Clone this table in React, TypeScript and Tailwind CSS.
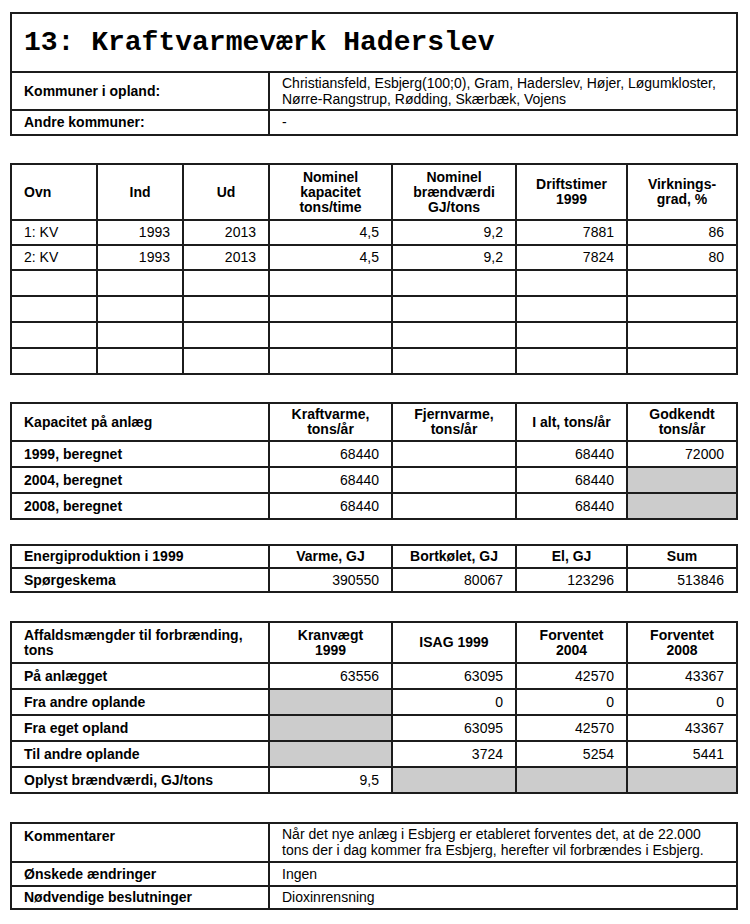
import React from 'react';

const cell = 'border-2 border-[#1c1c1c] px-[12px]';
const head = 'border-2 border-[#1c1c1c] px-[6px] text-center font-bold text-[14px] leading-[15px]';
const label = 'border-2 border-[#1c1c1c] px-[12px] font-bold text-[14px]';
const num = 'border-2 border-[#1c1c1c] px-[12px] text-right text-[14px]';
const grey = 'border-2 border-[#1c1c1c] bg-[#cccccc]';

const WideCols = () => (
  <colgroup>
    <col className="w-[258px]" />
    <col className="w-[123px]" />
    <col className="w-[124px]" />
    <col className="w-[111px]" />
    <col />
  </colgroup>
);

const ovne = [
  ['1: KV', '1993', '2013', '4,5', '9,2', '7881', '86'],
  ['2: KV', '1993', '2013', '4,5', '9,2', '7824', '80'],
];

const affald: { name: string; vals: (string | null)[] }[] = [
  { name: 'På anlægget', vals: ['63556', '63095', '42570', '43367'] },
  { name: 'Fra andre oplande', vals: [null, '0', '0', '0'] },
  { name: 'Fra eget opland', vals: [null, '63095', '42570', '43367'] },
  { name: 'Til andre oplande', vals: [null, '3724', '5254', '5441'] },
  { name: 'Oplyst brændværdi, GJ/tons', vals: ['9,5', null, null, null] },
];

const App: React.FC = () => {
  return (
    <div className="w-[750px] min-h-[924px] bg-white text-black font-['Liberation_Sans',Arial,sans-serif] pt-[12px] pl-[10px]">
      {/* stamdata */}
      <table className="w-[728px] table-fixed border-collapse">
        <colgroup>
          <col className="w-[258px]" />
          <col />
        </colgroup>
        <tbody>
          <tr className="h-[59px]">
            <td colSpan={2} className={`${cell} font-['Liberation_Mono',monospace] font-bold text-[28px]`}>
              13: Kraftvarmeværk Haderslev
            </td>
          </tr>
          <tr className="h-[38px]">
            <td className={label}>Kommuner i opland:</td>
            <td className={`${cell} text-[14px] leading-[16px]`}>
              Christiansfeld, Esbjerg(100;0), Gram, Haderslev, Højer, Løgumkloster,
              <br />
              Nørre-Rangstrup, Rødding, Skærbæk, Vojens
            </td>
          </tr>
          <tr className="h-[25px]">
            <td className={label}>Andre kommuner:</td>
            <td className={`${cell} text-[14px]`}>-</td>
          </tr>
        </tbody>
      </table>

      {/* ovne */}
      <table className="w-[728px] table-fixed border-collapse mt-[27px]">
        <colgroup>
          <col className="w-[86px]" />
          <col className="w-[86px]" />
          <col className="w-[86px]" />
          <col className="w-[123px]" />
          <col className="w-[124px]" />
          <col className="w-[111px]" />
          <col />
        </colgroup>
        <tbody>
          <tr className="h-[56px]">
            <td className={`${label} text-left`}>Ovn</td>
            <td className={head}>Ind</td>
            <td className={head}>Ud</td>
            <td className={head}>Nominel<br />kapacitet<br />tons/time</td>
            <td className={head}>Nominel<br />brændværdi<br />GJ/tons</td>
            <td className={head}>Driftstimer<br />1999</td>
            <td className={head}>Virknings-<br />grad, %</td>
          </tr>
          {ovne.map((r) => (
            <tr key={r[0]} className="h-[25px]">
              <td className={`${cell} text-[14px]`}>{r[0]}</td>
              {r.slice(1).map((v, i) => (
                <td key={i} className={num}>{v}</td>
              ))}
            </tr>
          ))}
          {[0, 1, 2, 3].map((i) => (
            <tr key={i} className="h-[26px]">
              {[0, 1, 2, 3, 4, 5, 6].map((j) => (
                <td key={j} className={cell} />
              ))}
            </tr>
          ))}
        </tbody>
      </table>

      {/* kapacitet */}
      <table className="w-[728px] table-fixed border-collapse mt-[27px]">
        <WideCols />
        <tbody>
          <tr className="h-[38px]">
            <td className={label}>Kapacitet på anlæg</td>
            <td className={head}>Kraftvarme,<br />tons/år</td>
            <td className={head}>Fjernvarme,<br />tons/år</td>
            <td className={head}>I alt, tons/år</td>
            <td className={head}>Godkendt<br />tons/år</td>
          </tr>
          {['1999', '2004', '2008'].map((y) => (
            <tr key={y} className="h-[26px]">
              <td className={label}>{y}, beregnet</td>
              <td className={num}>68440</td>
              <td className={cell} />
              <td className={num}>68440</td>
              {y === '1999' ? <td className={num}>72000</td> : <td className={grey} />}
            </tr>
          ))}
        </tbody>
      </table>

      {/* energi */}
      <table className="w-[728px] table-fixed border-collapse mt-[24px]">
        <WideCols />
        <tbody>
          <tr className="h-[23px]">
            <td className={label}>Energiproduktion i 1999</td>
            <td className={head}>Varme, GJ</td>
            <td className={head}>Bortkølet, GJ</td>
            <td className={head}>El, GJ</td>
            <td className={head}>Sum</td>
          </tr>
          <tr className="h-[24px]">
            <td className={label}>Spørgeskema</td>
            <td className={num}>390550</td>
            <td className={num}>80067</td>
            <td className={num}>123296</td>
            <td className={num}>513846</td>
          </tr>
        </tbody>
      </table>

      {/* affaldsmængder */}
      <table className="w-[728px] table-fixed border-collapse mt-[28px]">
        <WideCols />
        <tbody>
          <tr className="h-[41px]">
            <td className={`${label} leading-[15px]`}>Affaldsmængder til forbrænding,<br />tons</td>
            <td className={head}>Kranvægt<br />1999</td>
            <td className={head}>ISAG 1999</td>
            <td className={head}>Forventet<br />2004</td>
            <td className={head}>Forventet<br />2008</td>
          </tr>
          {affald.map((r) => (
            <tr key={r.name} className="h-[26px]">
              <td className={label}>{r.name}</td>
              {r.vals.map((v, i) =>
                v === null ? <td key={i} className={grey} /> : <td key={i} className={num}>{v}</td>
              )}
            </tr>
          ))}
        </tbody>
      </table>

      {/* kommentarer */}
      <table className="w-[728px] table-fixed border-collapse mt-[28px]">
        <colgroup>
          <col className="w-[258px]" />
          <col />
        </colgroup>
        <tbody>
          <tr className="h-[39px]">
            <td className={`${label} align-top pt-[2px]`}>Kommentarer</td>
            <td className={`${cell} align-top pt-[2px] text-[14px] leading-[16px]`}>
              Når det nye anlæg i Esbjerg er etableret forventes det, at de 22.000
              <br />
              tons der i dag kommer fra Esbjerg, herefter vil forbrændes i Esbjerg.
            </td>
          </tr>
          <tr className="h-[24px]">
            <td className={label}>Ønskede ændringer</td>
            <td className={`${cell} text-[14px]`}>Ingen</td>
          </tr>
          <tr className="h-[23px]">
            <td className={label}>Nødvendige beslutninger</td>
            <td className={`${cell} text-[14px]`}>Dioxinrensning</td>
          </tr>
        </tbody>
      </table>
    </div>
  );
};

export default App;
